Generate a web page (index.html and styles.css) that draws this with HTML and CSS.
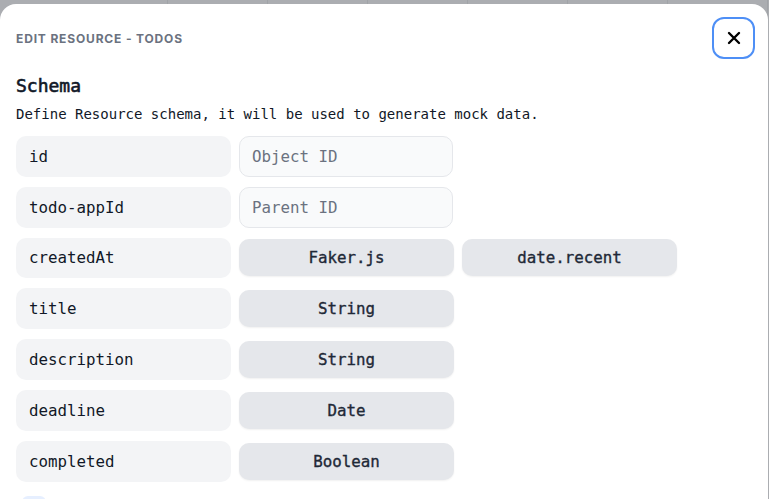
FILE: index.html
```html
<!DOCTYPE html>
<html>
<head>
<meta charset="utf-8">
<link rel="stylesheet" href="styles.css">
</head>
<body>
<div class="modal">
  <div class="modal-head">
    <div class="modal-title">Edit Resource - todos</div>
    <button class="close-btn" aria-label="Close">
      <svg width="14" height="14" viewBox="0 0 14 14"><path d="M2 2 L12 12 M12 2 L2 12" stroke="#000" stroke-width="2.4" stroke-linecap="round"/></svg>
    </button>
  </div>
  <h2 class="section-title">Schema</h2>
  <p class="section-desc">Define Resource schema, it will be used to generate mock data.</p>
  <div class="rows">
    <div class="row"><div class="field-name">id</div><div class="field-input">Object ID</div></div>
    <div class="row"><div class="field-name">todo-appId</div><div class="field-input">Parent ID</div></div>
    <div class="row"><div class="field-name">createdAt</div><div class="field-btn">Faker.js</div><div class="field-btn">date.recent</div></div>
    <div class="row"><div class="field-name">title</div><div class="field-btn">String</div></div>
    <div class="row"><div class="field-name">description</div><div class="field-btn">String</div></div>
    <div class="row"><div class="field-name">deadline</div><div class="field-btn">Date</div></div>
    <div class="row"><div class="field-name">completed</div><div class="field-btn">Boolean</div></div>
  </div>
  <div class="add-btn"></div>
</div>
</body>
</html>
```
FILE: styles.css
```css
* { box-sizing: border-box; }
html, body { margin: 0; padding: 0; height: 100%; overflow: hidden; }
body {
  background-color: #abadb1;
  background-image: repeating-linear-gradient(to right, #abadb1 0 99px, #a0a3a7 99px 100px);
  background-position: 68px 0;
  font-family: "DejaVu Sans Mono", monospace;
}
.modal {
  position: fixed;
  top: 4px;
  left: 0;
  width: 768px;
  bottom: 0;
  background: #fff;
  border-radius: 16px 16px 0 0;
  padding: 13px 13px 0 16px;
}
.modal-head {
  display: flex;
  justify-content: space-between;
  align-items: center;
}
.modal-title {
  font-family: Inter, "Liberation Sans", sans-serif;
  font-size: 12px;
  font-weight: 700;
  letter-spacing: 0.07em;
  text-transform: uppercase;
  color: #6b7280;
}
.close-btn {
  width: 43px;
  height: 42px;
  border: 2px solid #4e8ff6;
  border-radius: 12px;
  background: #fff;
  display: flex;
  align-items: center;
  justify-content: center;
  padding: 0;
}
.section-title {
  margin: 15px 0 0;
  font-size: 18px;
  line-height: 24px;
  font-weight: 400;
  -webkit-text-stroke: 0.6px #111827;
  color: #111827;
}
.section-desc {
  margin: 6px 0 0;
  font-size: 14px;
  line-height: 20px;
  color: #111827;
}
.rows {
  margin-top: 12px;
  display: flex;
  flex-direction: column;
  gap: 10px;
}
.row {
  display: flex;
  align-items: center;
  gap: 8px;
  height: 40.8px;
}
.field-name {
  width: 215px;
  height: 100%;
  background: #f3f4f6;
  border-radius: 10px;
  padding-left: 13px;
  display: flex;
  align-items: center;
  font-size: 15.8px;
  color: #111827;
}
.field-input {
  width: 214px;
  height: 100%;
  background: #f9fafb;
  border: 1px solid #e5e7eb;
  border-radius: 10px;
  padding-left: 12px;
  display: flex;
  align-items: center;
  font-size: 15.8px;
  color: #6b7280;
}
.field-btn {
  width: 215px;
  height: 37px;
  background: #e5e7eb;
  border-radius: 10px;
  box-shadow: 0 1px 2px rgba(0,0,0,0.06);
  display: flex;
  align-items: center;
  justify-content: center;
  font-size: 15.8px;
  font-weight: 400;
  -webkit-text-stroke: 0.35px #1f2937;
  color: #1f2937;
}
.add-btn {
  margin: 14px 0 0 6px;
  width: 24px;
  height: 24px;
  border-radius: 6px;
  background: #e6efff;
}
```
